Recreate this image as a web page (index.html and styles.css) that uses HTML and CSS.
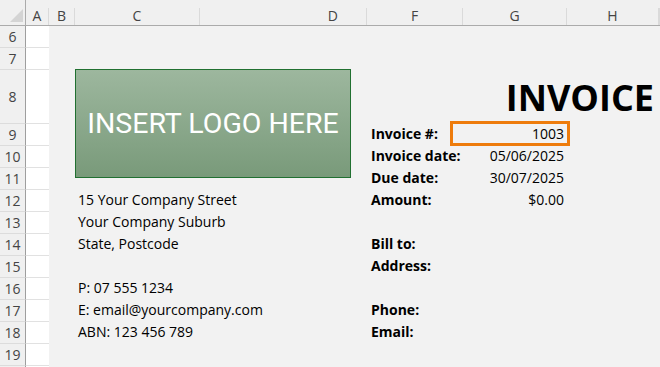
FILE: index.html
```html
<!DOCTYPE html>
<html lang="en">
<head>
    <meta charset="UTF-8">
    <meta name="viewport" content="width=device-width, initial-scale=1.0">
    <title>Invoice</title>
    <link rel="stylesheet" href="styles.css">
</head>
<body>
    <div class="sheet">
        <div class="head">
            <div class="corner"><span class="tri"></span></div>
            <div>A</div>
            <div>B</div>
            <div>C</div>
            <div class="hd">D</div>
            <div>F</div>
            <div>G</div>
            <div>H</div>
            <div></div>
        </div>

        <div class="row"><div class="num">6</div><div class="a"></div></div>
        <div class="row"><div class="num">7</div><div class="a"></div></div>
        <div class="row tall"><div class="num">8</div><div class="a"></div><div class="t title">INVOICE</div></div>
        <div class="row"><div class="num">9</div><div class="a"></div><div class="t cf b">Invoice #:</div><div class="t cg">1003</div></div>
        <div class="row"><div class="num">10</div><div class="a"></div><div class="t cf b">Invoice date:</div><div class="t cg">05/06/2025</div></div>
        <div class="row"><div class="num">11</div><div class="a"></div><div class="t cf b">Due date:</div><div class="t cg">30/07/2025</div></div>
        <div class="row"><div class="num">12</div><div class="a"></div><div class="t cc">15 Your Company Street</div><div class="t cf b">Amount:</div><div class="t cg">$0.00</div></div>
        <div class="row"><div class="num">13</div><div class="a"></div><div class="t cc">Your Company Suburb</div></div>
        <div class="row"><div class="num">14</div><div class="a"></div><div class="t cc">State, Postcode</div><div class="t cf b">Bill to:</div></div>
        <div class="row"><div class="num">15</div><div class="a"></div><div class="t cf b">Address:</div></div>
        <div class="row"><div class="num">16</div><div class="a"></div><div class="t cc">P: 07 555 1234</div></div>
        <div class="row"><div class="num">17</div><div class="a"></div><div class="t cc">E: email@yourcompany.com</div><div class="t cf b">Phone:</div></div>
        <div class="row"><div class="num">18</div><div class="a"></div><div class="t cc">ABN: 123 456 789</div><div class="t cf b">Email:</div></div>
        <div class="row"><div class="num">19</div><div class="a"></div></div>
        <div class="row"><div class="num"></div><div class="a"></div></div>

        <div class="logo">INSERT LOGO HERE</div>
        <div class="pick"></div>
    </div>
</body>
</html>
```

FILE: styles.css
```css
* { box-sizing: border-box; }
body { margin: 0; background: #f2f2f2; font-family: "Open Sans", "Noto Sans", sans-serif; color: #000; }
.sheet { position: relative; width: 660px; height: 367px; overflow: hidden; }

.head, .row { display: grid; grid-template-columns: 26px 23px 26px 125px 167px 96px 104px 92px 1fr; }
.head { height: 26px; background: #f0f0f0; border-bottom: 1px solid #ababab; }
.head div { margin-top: 8px; line-height: 15px; text-align: center; font-size: 14px; color: #444; border-right: 1px solid #dadada; }
.head .corner { margin-top: 0; position: relative; border-right: 1px solid #ababab; }
.head .hd { text-align: right; padding-right: 28px; }
.tri { position: absolute; left: 10px; top: 9px; width: 13px; height: 13px; background: #d4d4d4; clip-path: polygon(100% 0, 100% 100%, 0 100%); }

.row { height: 22px; }
.row.tall { height: 54px; }
.num { background: #f0f0f0; border-right: 1px solid #9e9e9e; border-bottom: 1px solid #dcdcdc; font-size: 14px; color: #444; text-align: center; display: flex; align-items: center; justify-content: center; }
.a { background: #fff; border-bottom: 1px solid #e1e1e1; }

.t { display: flex; align-items: flex-end; padding: 0 3px 2px; font-size: 14px; line-height: 20px; white-space: nowrap; }
.cc { grid-column: 4 / 6; }
.cf { grid-column: 6; padding-left: 4px; }
.cg { grid-column: 7; justify-content: flex-end; }
.b { font-weight: bold; }
.title { grid-column: 6 / 10; justify-content: flex-end; font-size: 36px; font-weight: bold; line-height: 44px; padding: 0 6px 4px 0; }

.logo { position: absolute; left: 75px; top: 69px; width: 276px; height: 109px; border: 1px solid #217031; background: linear-gradient(#9db79e, #799a7a); color: #fff; font-family: Roboto, sans-serif; font-size: 28.5px; display: flex; align-items: center; justify-content: center; }
.pick { position: absolute; left: 450px; top: 121px; width: 120px; height: 25px; border: 3px solid #ee7c0c; }
```
